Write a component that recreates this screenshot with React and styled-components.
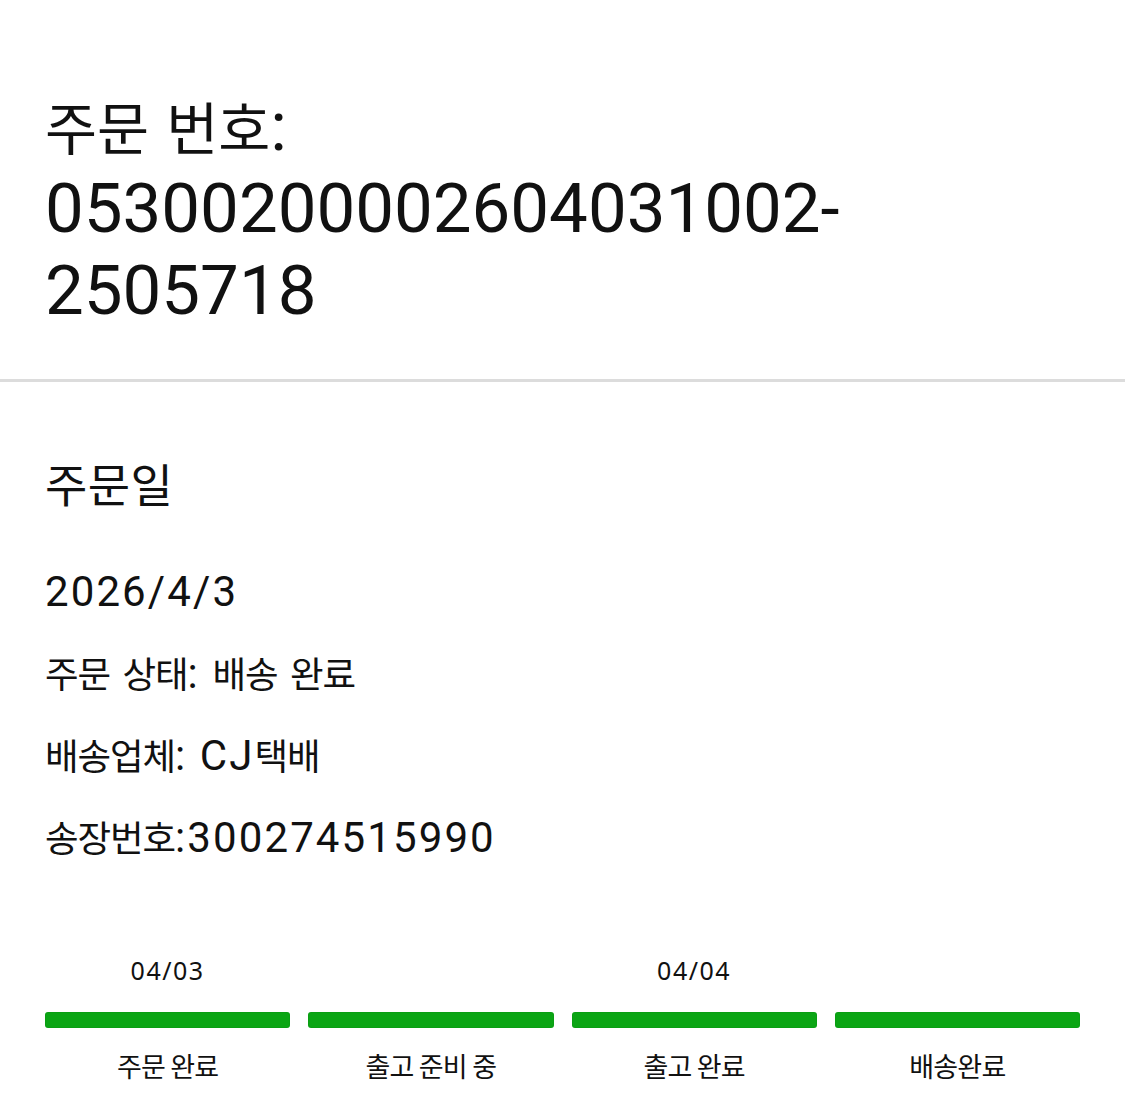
import React from "react";
import styled, { createGlobalStyle } from "styled-components";

const GlobalStyle = createGlobalStyle`
  html, body {
    margin: 0;
    padding: 0;
    background: #ffffff;
  }
  body {
    font-family: Roboto, "Noto Sans CJK KR", sans-serif;
    color: #111111;
  }
`;

const Page = styled.div`
  width: 1125px;
  min-height: 1104px;
  background: #ffffff;
  display: flex;
  flex-direction: column;
`;

const Ko = styled.span`
  font-family: "Noto Sans CJK KR", sans-serif;
  font-size: ${(p) => p.$scale || 0.82}em;
  letter-spacing: ${(p) => p.$track || "0"};
  line-height: 1;
`;

const Header = styled.header`
  padding: 86px 45px 47px;
  border-bottom: 3px solid #dcdcdc;
`;

const Title = styled.h1`
  margin: 0;
  max-width: 880px;
  font-family: Roboto, "Noto Sans CJK KR", sans-serif;
  font-weight: 400;
  font-size: 69px;
  line-height: 82px;
  color: #111111;
`;

const OrderNo = styled.span`
  display: block;
`;

const Body = styled.section`
  padding: 77px 45px 0;
  display: flex;
  flex-direction: column;
`;

const Heading = styled.h2`
  margin: 0;
  font-family: "Noto Sans CJK KR", sans-serif;
  font-weight: 400;
  font-size: 46px;
  line-height: 1;
  letter-spacing: 0.01em;
  color: #111111;
`;

const Details = styled.div`
  margin-top: 62px;
  display: flex;
  flex-direction: column;
  gap: 31.5px;
`;

const Line = styled.p`
  margin: 0;
  font-family: Roboto, "Noto Sans CJK KR", sans-serif;
  font-size: 42px;
  line-height: 1.2;
  letter-spacing: 0.05em;
  color: #111111;
`;

const Steps = styled.div`
  margin-top: 93px;
  display: grid;
  grid-template-columns: repeat(4, 1fr);
  column-gap: 18px;
`;

const Step = styled.div`
  display: flex;
  flex-direction: column;
  align-items: stretch;
`;

const StepDate = styled.div`
  height: 29px;
  font-family: "Noto Sans", Roboto, sans-serif;
  font-size: 25px;
  line-height: 29px;
  letter-spacing: 0.06em;
  text-align: center;
  color: #111111;
`;

const Bar = styled.div`
  margin-top: 27px;
  height: 16px;
  border-radius: 3px;
  background: ${(p) => (p.$done ? "#0ba514" : "#d9d9d9")};
  box-shadow: inset 0 0 0 1px rgba(0, 0, 0, 0.04);
`;

const StepLabel = styled.div`
  margin-top: 22px;
  font-family: "Noto Sans CJK KR", sans-serif;
  font-size: 27px;
  line-height: 1.2;
  letter-spacing: -0.03em;
  text-align: center;
  color: #111111;
`;

const steps = [
  { date: "04/03", label: "주문 완료", done: true },
  { date: "", label: "출고 준비 중", done: true },
  { date: "04/04", label: "출고 완료", done: true },
  { date: "", label: "배송완료", done: true },
];

const kd = { $scale: 0.87, $track: "-0.03em" };

export default function App() {
  return (
    <>
      <GlobalStyle />
      <Page>
        <Header>
          <Title>
            <Ko>주문</Ko> <Ko>번호</Ko>:
            <OrderNo>05300200002604031002-2505718</OrderNo>
          </Title>
        </Header>
        <Body>
          <Heading>주문일</Heading>
          <Details>
            <Line>2026/4/3</Line>
            <Line>
              <Ko {...kd}>주문</Ko> <Ko {...kd}>상태</Ko>:{" "}
              <Ko {...kd}>배송</Ko> <Ko {...kd}>완료</Ko>
            </Line>
            <Line>
              <Ko {...kd}>배송업체</Ko>: CJ<Ko {...kd}>택배</Ko>
            </Line>
            <Line>
              <Ko {...kd}>송장번호</Ko>:300274515990
            </Line>
          </Details>
          <Steps>
            {steps.map((s) => (
              <Step key={s.label}>
                <StepDate>{s.date}</StepDate>
                <Bar $done={s.done} />
                <StepLabel>{s.label}</StepLabel>
              </Step>
            ))}
          </Steps>
        </Body>
      </Page>
    </>
  );
}
